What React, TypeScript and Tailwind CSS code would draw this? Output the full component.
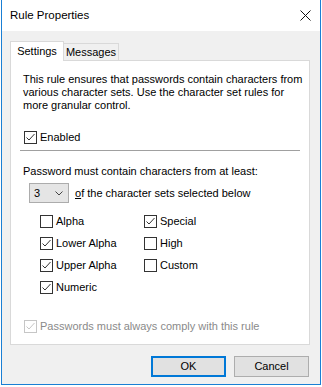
import React from 'react';

const FONT = { fontFamily: '"Liberation Sans", Arial, sans-serif' };

/* ── Checkbox ─────────────────────────────── */
function Check({ checked, label, disabled }: { checked: boolean; label: string; disabled?: boolean }) {
  return (
    <div className="flex items-center h-[13px]">
      <div
        className={`w-[13px] h-[13px] border bg-white shrink-0 flex items-center justify-center ${
          disabled ? 'border-[#c6c6c6]' : 'border-[#333333]'
        }`}
      >
        {checked && (
          <svg width="11" height="11" viewBox="0 0 11 11">
            <polyline
              points="1.5,5.5 4,8 9.5,2"
              fill="none"
              stroke={disabled ? '#c6c6c6' : '#333333'}
              strokeWidth="1"
            />
          </svg>
        )}
      </div>
      <span className={`ml-[3px] text-[11px] leading-[13px] ${disabled ? 'text-[#8a8a8a]' : 'text-black'}`}>{label}</span>
    </div>
  );
}

export default function App() {
  return (
    <div className="w-[322px] h-[387px] bg-white" style={FONT}>
      <div className="ml-px w-[320px] h-[385px] border-x border-b border-[#1a7fd4] flex flex-col">
        {/* title bar */}
        <div className="h-[31px] bg-white flex items-center justify-between pl-[8px] pr-[9px] shrink-0">
          <span className="text-[11.5px] text-black">Rule Properties</span>
          <svg width="11" height="11" viewBox="0 0 11 11">
            <path d="M0.5 0.5 L10.5 10.5 M10.5 0.5 L0.5 10.5" stroke="#111" strokeWidth="1" />
          </svg>
        </div>

        {/* body */}
        <div className="flex-1 bg-[#f0f0f0] flex flex-col pl-[8px] pr-[10px]">
          {/* tabs */}
          <div className="flex items-end h-[30px] relative z-10">
            <div className="w-[54px] h-[20px] bg-white border border-b-0 border-[#d9d9d9] flex items-center justify-center text-[11px] text-black">
              Settings
            </div>
            <div className="w-[55px] h-[17px] mb-px bg-[#f0f0f0] border border-l-0 border-b-0 border-[#d9d9d9] flex items-center justify-center text-[11px] text-black">
              Messages
            </div>
          </div>

          {/* panel */}
          <div className="-mt-px h-[285px] bg-white border border-[#d9d9d9] pl-[12px] pr-[6px] pt-[12px] flex flex-col">
            <p className="text-[11px] leading-[13px] text-black">
              This rule ensures that passwords contain characters from various character sets. Use the character set rules for more granular control.
            </p>
            <div className="mt-[19px] ml-px">
              <Check checked label="Enabled" />
            </div>
            <div className="mt-[6px] ml-[-3px] mr-[3px] h-px bg-[#a0a0a0]" />

            <p className="mt-[14px] text-[11px] leading-[13px] text-black">Password must contain characters from at least:</p>

            <div className="mt-[5px] ml-[6px] flex items-center">
              <div className="w-[40px] h-[20px] bg-[#e5e5e5] border border-[#acacac] flex items-center justify-between pl-[4px] pr-[5px]">
                <span className="text-[11px] text-black">3</span>
                <svg width="8" height="5" viewBox="0 0 8 5">
                  <polyline points="0.5,0.5 4,4 7.5,0.5" fill="none" stroke="#444" strokeWidth="1" />
                </svg>
              </div>
              <span className="ml-[6px] text-[11px] text-black">
                <span className="underline">o</span>f the character sets selected below
              </span>
            </div>

            <div className="mt-[12px] ml-[17px] grid grid-cols-[104px_auto] gap-y-[9px]">
              <Check checked={false} label="Alpha" />
              <Check checked label="Special" />
              <Check checked label="Lower Alpha" />
              <Check checked={false} label="High" />
              <Check checked label="Upper Alpha" />
              <Check checked={false} label="Custom" />
              <Check checked label="Numeric" />
            </div>

            <div className="mt-[26px] ml-px">
              <Check checked disabled label="Passwords must always comply with this rule" />
            </div>
          </div>

          {/* buttons */}
          <div className="mt-[11px] flex justify-end gap-[8px] pr-px">
            <button className="w-[75px] h-[21px] bg-[#e1e1e1] border-2 border-[#0078d7] text-[11px] text-black">OK</button>
            <button className="w-[75px] h-[21px] bg-[#e1e1e1] border border-[#adadad] text-[11px] text-black">Cancel</button>
          </div>
        </div>
      </div>
    </div>
  );
}
